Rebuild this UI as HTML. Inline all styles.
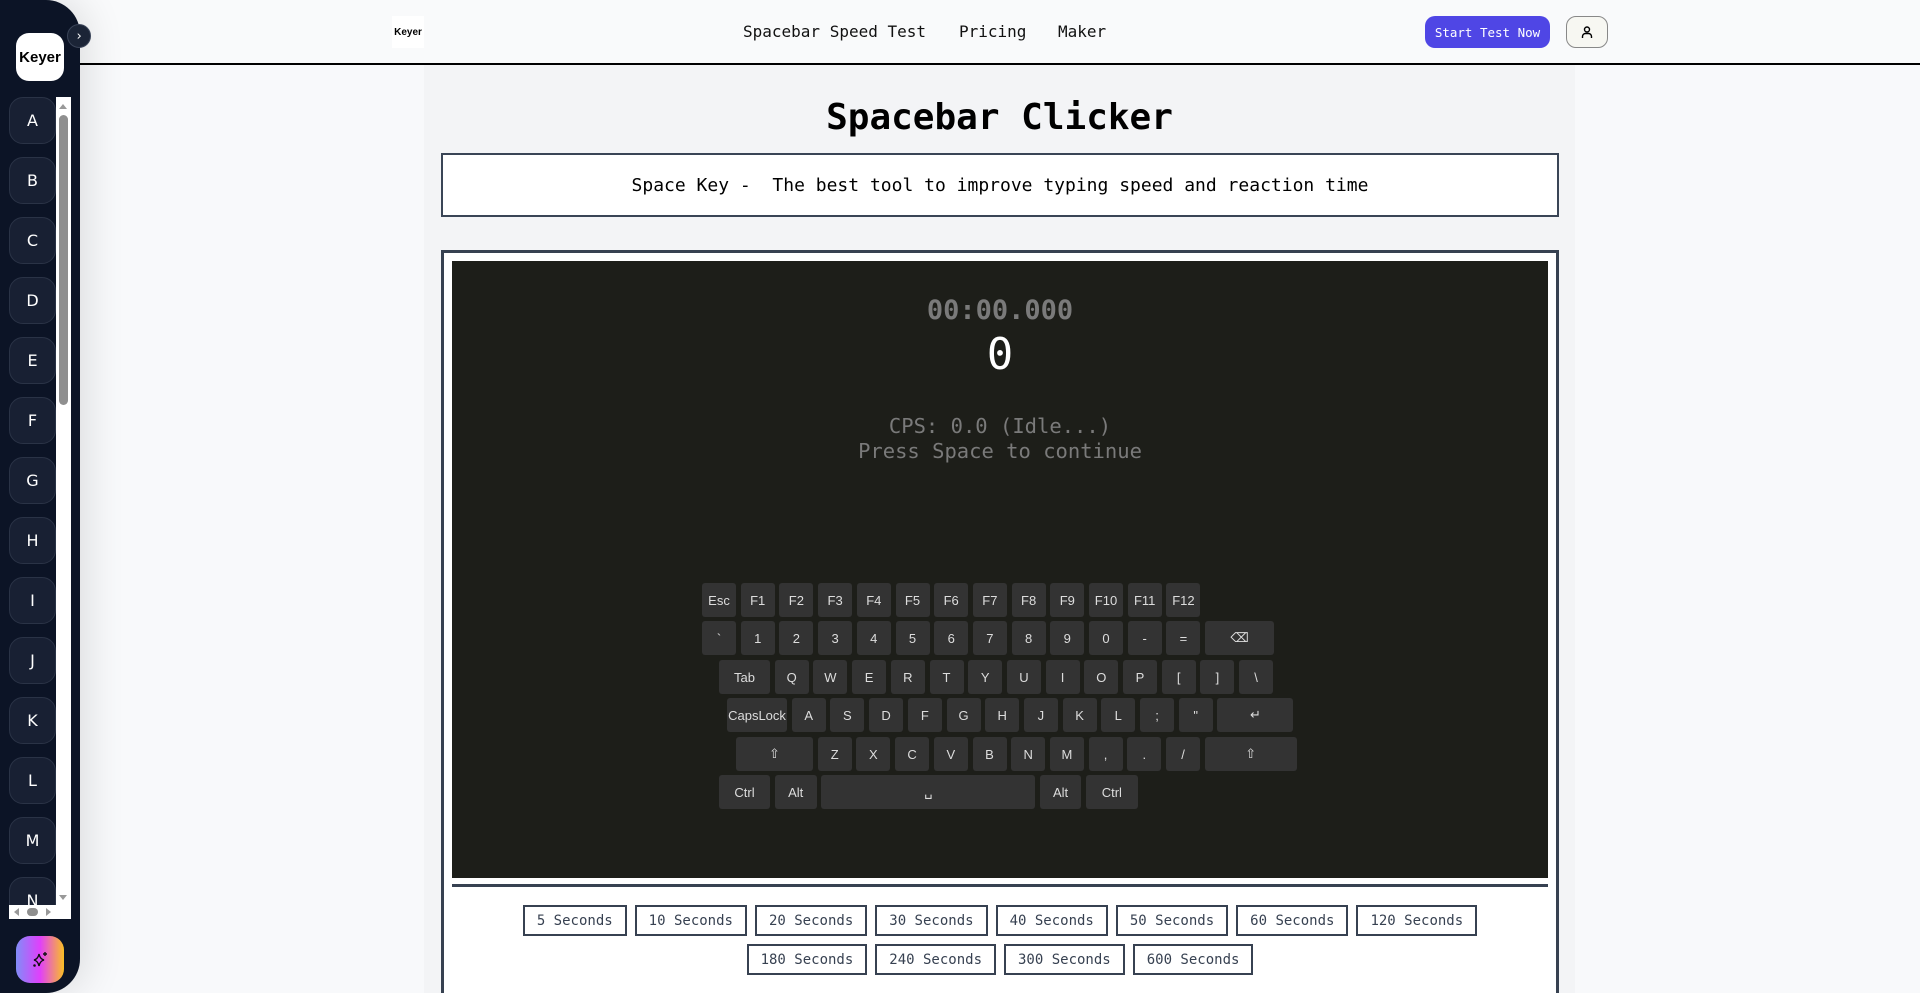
<!DOCTYPE html>
<html><head><meta charset="utf-8"><style>
*{box-sizing:border-box;margin:0;padding:0}
html,body{width:1920px;height:993px;overflow:hidden}
body{background:#f8f9fb;font-family:"DejaVu Sans Mono","Liberation Mono",monospace;position:relative}
.abs{position:absolute}
#side{left:0;top:0;width:80px;height:993px;background:#0c1426;border-radius:0 34px 34px 0;box-shadow:6px 0 40px rgba(0,0,0,.12)}
.logo{background:#fff;font-family:"Liberation Sans",sans-serif;font-weight:bold;color:#000;display:flex;align-items:center;justify-content:center}
.lk{left:9px;width:47px;height:47px;background:#182033;border:1px solid #2a3346;border-radius:14px;color:#fff;font-size:16px;display:flex;align-items:center;justify-content:center;font-family:"DejaVu Sans",sans-serif}
.nav{top:22px;font-size:16px;color:#111}
.key{position:absolute;height:34px;background:#333333;border-radius:3px;color:#ddd;font-family:"Liberation Sans",sans-serif;font-size:13px;display:flex;align-items:center;justify-content:center}
.btn{border:2px solid #374151;background:#fff;color:#374151;font-size:14px;height:31px;padding:0 12px;display:flex;align-items:center;margin:0 4px}
.row{position:absolute;left:452px;width:1096px;display:flex;justify-content:center}
</style></head><body>
<div class="abs" style="left:80px;top:0;width:1840px;height:65px;background:#f9fafb;border-bottom:2px solid #000"></div>
<div class="abs" style="left:424px;top:65px;width:1151px;height:928px;background:#f3f4f6"></div>
<div class="abs logo" style="left:392px;top:16px;width:32px;height:32px;font-size:10px">Keyer</div>
<div class="abs nav" style="left:743px">Spacebar Speed Test</div>
<div class="abs nav" style="left:959px">Pricing</div>
<div class="abs nav" style="left:1058px">Maker</div>
<div class="abs" style="left:1425px;top:16px;width:125px;height:32px;background:#4f46e5;border-radius:10px;color:#fff;font-size:12.5px;display:flex;align-items:center;justify-content:center">Start Test Now</div>
<div class="abs" style="left:1566px;top:16px;width:42px;height:32px;background:#f7f7f2;border:1px solid #888;border-radius:10px;display:flex;align-items:center;justify-content:center"><svg width="14" height="14" viewBox="0 0 14 14" fill="none" stroke="#000" stroke-width="1.4"><circle cx="7" cy="4.5" r="2.5"/><path d="M2.5 13v-1.5a3 3 0 0 1 3-3h3a3 3 0 0 1 3 3V13"/></svg></div>

<div class="abs" style="left:424px;top:97px;width:1151px;text-align:center;font-size:36px;font-weight:bold;color:#000">Spacebar Clicker</div>
<div class="abs" style="left:441px;top:153px;width:1118px;height:64px;border:2px solid #3a4556;background:#fff;display:flex;align-items:center;justify-content:center;font-size:18px;color:#000;white-space:pre">Space Key -  The best tool to improve typing speed and reaction time</div>
<div class="abs" style="left:441px;top:250px;width:1118px;height:760px;border:3px solid #374151;background:#fff"></div>
<div class="abs" style="left:452px;top:261px;width:1096px;height:617px;background:#1d1e19"></div>
<div class="abs" style="left:452px;top:884px;width:1096px;height:3px;background:#374151"></div>
<div class="abs" style="left:452px;top:295px;width:1096px;text-align:center;font-size:27px;font-weight:bold;color:#7a7a7a">00:00.000</div>
<div class="abs" style="left:452px;top:329px;width:1096px;text-align:center;font-size:44px;color:#fff">0</div>
<div class="abs" style="left:452px;top:414px;width:1096px;text-align:center;font-size:20.5px;color:#7a7a7a;line-height:25px">CPS: 0.0 (Idle...)<br>Press Space to continue</div>

<div id="kb"></div>

<div class="row" style="top:905px"><div class="btn">5 Seconds</div><div class="btn">10 Seconds</div><div class="btn">20 Seconds</div><div class="btn">30 Seconds</div><div class="btn">40 Seconds</div><div class="btn">50 Seconds</div><div class="btn">60 Seconds</div><div class="btn">120 Seconds</div></div>
<div class="row" style="top:944px"><div class="btn">180 Seconds</div><div class="btn">240 Seconds</div><div class="btn">300 Seconds</div><div class="btn">600 Seconds</div></div>

<div id="side" class="abs">
<div class="abs logo" style="left:16px;top:33px;width:48px;height:48px;border-radius:13px;font-size:15px">Keyer</div>
<div class="abs" style="left:67px;top:24px;width:24px;height:24px;border-radius:12px;background:#1b2436;border:1px solid #3a4458;color:#fff;font-size:13px;display:flex;align-items:center;justify-content:center;z-index:3">›</div>
<div class="abs" style="left:56px;top:97px;width:15px;height:822px;background:#fff"></div>
<div class="abs" style="left:59px;top:104px;width:0;height:0;border-left:4.5px solid transparent;border-right:4.5px solid transparent;border-bottom:5px solid #999"></div>
<div class="abs" style="left:59px;top:895px;width:0;height:0;border-left:4.5px solid transparent;border-right:4.5px solid transparent;border-top:5px solid #999"></div>
<div class="abs" style="left:59px;top:115px;width:9px;height:290px;background:#8f8f8f;border-radius:5px"></div>
<div class="abs" style="left:9px;top:905px;width:62px;height:14px;background:#fff"></div>
<div class="abs" style="left:14px;top:908px;width:0;height:0;border-top:4px solid transparent;border-bottom:4px solid transparent;border-right:5px solid #999"></div>
<div class="abs" style="left:46px;top:908px;width:0;height:0;border-top:4px solid transparent;border-bottom:4px solid transparent;border-left:5px solid #999"></div>
<div class="abs" style="left:27px;top:908px;width:11px;height:8px;background:#8f8f8f;border-radius:5px"></div>
<div class="abs" style="left:0;top:97px;width:56px;height:808px;overflow:hidden">
<div class="lk abs" style="top:0">A</div><div class="lk abs" style="top:60px">B</div><div class="lk abs" style="top:120px">C</div><div class="lk abs" style="top:180px">D</div><div class="lk abs" style="top:240px">E</div><div class="lk abs" style="top:300px">F</div><div class="lk abs" style="top:360px">G</div><div class="lk abs" style="top:420px">H</div><div class="lk abs" style="top:480px">I</div><div class="lk abs" style="top:540px">J</div><div class="lk abs" style="top:600px">K</div><div class="lk abs" style="top:660px">L</div><div class="lk abs" style="top:720px">M</div><div class="lk abs" style="top:780px">N</div>
</div>
<div class="abs" style="left:16px;top:936px;width:48px;height:47px;border-radius:14px;background:linear-gradient(90deg,#818cf8,#e040fb 50%,#fbbf24);display:flex;align-items:center;justify-content:center"><svg width="18" height="18" viewBox="0 0 18 18" fill="none" stroke="#111" stroke-width="1.4"><path d="M8 3 Q9 8 13 9 Q9 10 8 15 Q7 10 3 9 Q7 8 8 3Z"/><path d="M14 1v4M12 3h4"/><circle cx="3.5" cy="14.5" r=".6" fill="#111"/></svg></div>
</div>
<script>
var W=34;
var rows=[[583,702,[["Esc",W],["F1",W],["F2",W],["F3",W],["F4",W],["F5",W],["F6",W],["F7",W],["F8",W],["F9",W],["F10",W],["F11",W],["F12",W]]],
[621,702,[["`",W],["1",W],["2",W],["3",W],["4",W],["5",W],["6",W],["7",W],["8",W],["9",W],["0",W],["-",W],["=",W],["⌫",69]]],
[660,719,[["Tab",51],["Q",W],["W",W],["E",W],["R",W],["T",W],["Y",W],["U",W],["I",W],["O",W],["P",W],["[",W],["]",W],["\\",W]]],
[698,727,[["CapsLock",60],["A",W],["S",W],["D",W],["F",W],["G",W],["H",W],["J",W],["K",W],["L",W],[";",W],["\"",W],["↵",76]]],
[737,736,[["⇧",77],["Z",W],["X",W],["C",W],["V",W],["B",W],["N",W],["M",W],[",",W],[".",W],["/",W],["⇧",92]]],
[775,719,[["Ctrl",51],["Alt",42],["␣",214],["Alt",41],["Ctrl",52]]]];
var h="";rows.forEach(function(r){var x=r[1];r[2].forEach(function(k){h+='<div class="key" style="left:'+x+'px;top:'+r[0]+'px;width:'+k[1]+'px">'+k[0]+'</div>';x+=k[1]+4.7;});});
document.getElementById('kb').innerHTML=h;
</script>
</body></html>
